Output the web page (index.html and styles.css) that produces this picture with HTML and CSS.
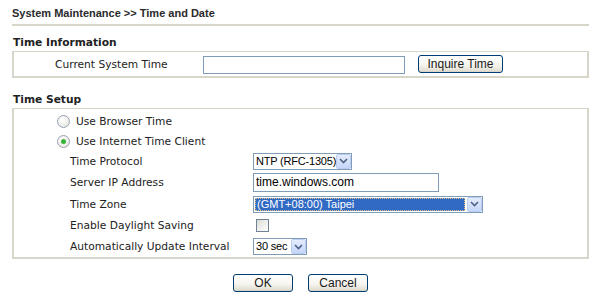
FILE: index.html
```html
<!DOCTYPE html>
<html lang="en">
<head>
    <meta charset="UTF-8">
    <title>Time and Date</title>
    <link rel="stylesheet" href="styles.css">
</head>
<body>

<div class="page">
    <div class="title">System Maintenance &gt;&gt; Time and Date</div>

    <div class="section-title">Time Information</div>
    <div class="box">
        <div class="info-row">
            <span class="info-label">Current System Time</span>
            <input class="text-input current-time" type="text" value="">
            <button class="btn inquire">Inquire Time</button>
        </div>
    </div>

    <div class="section-title setup-title">Time Setup</div>
    <div class="box setup">
        <div class="radio-row">
            <span class="radio"></span>
            <span>Use Browser Time</span>
        </div>
        <div class="radio-row">
            <span class="radio checked"></span>
            <span>Use Internet Time Client</span>
        </div>

        <div class="field-row">
            <span class="field-label">Time Protocol</span>
            <span class="select protocol">
                <span class="select-value">NTP (RFC-1305)</span>
                <span class="select-arrow"><svg width="9" height="6" viewBox="0 0 9 6"><path d="M1 1l3.5 3.5L8 1" fill="none" stroke="#4d6185" stroke-width="1.6"/></svg></span>
            </span>
        </div>
        <div class="field-row tall">
            <span class="field-label">Server IP Address</span>
            <input class="text-input server" type="text" value="time.windows.com">
        </div>
        <div class="field-row tall">
            <span class="field-label">Time Zone</span>
            <span class="select zone">
                <span class="select-value selected">(GMT+08:00) Taipei</span>
                <span class="select-arrow"><svg width="9" height="6" viewBox="0 0 9 6"><path d="M1 1l3.5 3.5L8 1" fill="none" stroke="#4d6185" stroke-width="1.6"/></svg></span>
            </span>
        </div>
        <div class="field-row mid">
            <span class="field-label">Enable Daylight Saving</span>
            <span class="checkbox"></span>
        </div>
        <div class="field-row mid">
            <span class="field-label">Automatically Update Interval</span>
            <span class="select interval">
                <span class="select-value">30 sec</span>
                <span class="select-arrow"><svg width="9" height="6" viewBox="0 0 9 6"><path d="M1 1l3.5 3.5L8 1" fill="none" stroke="#4d6185" stroke-width="1.6"/></svg></span>
            </span>
        </div>
    </div>

    <div class="actions">
        <button class="btn action">OK</button>
        <button class="btn action">Cancel</button>
    </div>
</div>

</body>
</html>
```

FILE: styles.css
```css
body {
    margin: 0;
    background-color: #ffffff;
    color: #222;
    font-family: "DejaVu Sans", Verdana, sans-serif;
    font-size: 8pt;
}

.page {
    padding: 7px 11px 0 12px;
}

.title {
    font-family: "Liberation Sans", Arial, sans-serif;
    font-weight: bold;
    font-size: 11px;
    line-height: 13px;
    color: #2a2a2a;
    padding-bottom: 4px;
    border-bottom: 2px solid #d8d6cb;
}

.section-title {
    font-weight: bold;
    line-height: 14px;
    margin-top: 10px;
    margin-bottom: 1px;
    padding-left: 1px;
}

.setup-title {
    margin-top: 15px;
}

.box {
    border: 2px solid #d8d6cb;
    border-top-width: 1px;
}

/* Time Information */

.info-row {
    display: flex;
    align-items: center;
    height: 24px;
    padding-left: 41px;
}

.info-label {
    width: 148px;
}

.text-input {
    box-sizing: border-box;
    border: 1px solid #7f9db9;
    padding: 0 2px;
    margin: 0;
    font-family: "Liberation Sans", Arial, sans-serif;
    font-size: 12px;
    color: #000;
    background: #fff;
}

.current-time {
    width: 202px;
    height: 18px;
    margin-top: 2px;
}

.btn {
    box-sizing: border-box;
    height: 18px;
    padding: 0;
    border: 1px solid #003c74;
    border-radius: 3px;
    background: linear-gradient(#ffffff, #f6f5f0 55%, #e3e0d5 90%, #d6d0c5);
    font-family: "Liberation Sans", Arial, sans-serif;
    font-size: 12px;
    line-height: 16px;
    color: #1a1a1a;
}

.inquire {
    width: 85px;
    margin-left: 13px;
}

/* Time Setup */

.setup {
    padding-top: 2px;
}

.radio-row {
    display: flex;
    align-items: center;
    height: 20px;
    padding-left: 43px;
}

.radio {
    box-sizing: border-box;
    width: 13px;
    height: 13px;
    margin-right: 6px;
    border: 1px solid #97a3b3;
    border-radius: 50%;
    background: radial-gradient(circle at 40% 35%, #ffffff, #ecebe6 70%, #dcdad3);
    display: flex;
    align-items: center;
    justify-content: center;
}

.radio.checked::after {
    content: "";
    width: 5px;
    height: 5px;
    border-radius: 50%;
    background: #3bb33b;
}

.field-row {
    display: flex;
    align-items: center;
    height: 20px;
    padding-left: 56px;
}

.field-row.tall {
    height: 22px;
}

.field-row.mid {
    height: 21px;
}

.field-label {
    width: 183px;
}

.select {
    box-sizing: border-box;
    display: flex;
    height: 17px;
    border: 1px solid #7f9db9;
    background: #fff;
    font-family: "Liberation Sans", Arial, sans-serif;
    font-size: 11px;
    color: #000;
}

.select-value {
    flex: 1;
    min-width: 0;
    padding-left: 2px;
    line-height: 15px;
    letter-spacing: -0.2px;
    white-space: nowrap;
}

.select-value.selected {
    margin: 1px 2px 1px 1px;
    padding-left: 2px;
    line-height: 13px;
    letter-spacing: 0;
    outline: 1px dotted #e8c27a;
    outline-offset: -1px;
    background: #316ac5;
    color: #fff;
}

.select-arrow {
    box-sizing: border-box;
    flex: none;
    width: 15px;
    border: 1px solid #bccdf2;
    border-radius: 2px;
    background: linear-gradient(#e4ecfd, #c6d6fa);
    display: flex;
    align-items: center;
    justify-content: center;
}

.protocol {
    width: 99px;
}

.server {
    width: 186px;
    height: 19px;
}

.zone {
    width: 230px;
}

.interval {
    width: 54px;
}

.checkbox {
    box-sizing: border-box;
    width: 13px;
    height: 13px;
    margin-left: 3px;
    border: 1px solid #6f8296;
    background: linear-gradient(135deg, #dcdcd6, #ffffff);
}

.actions {
    display: flex;
    justify-content: center;
    gap: 15px;
    margin-top: 15px;
}

.action {
    width: 60px;
}
```
